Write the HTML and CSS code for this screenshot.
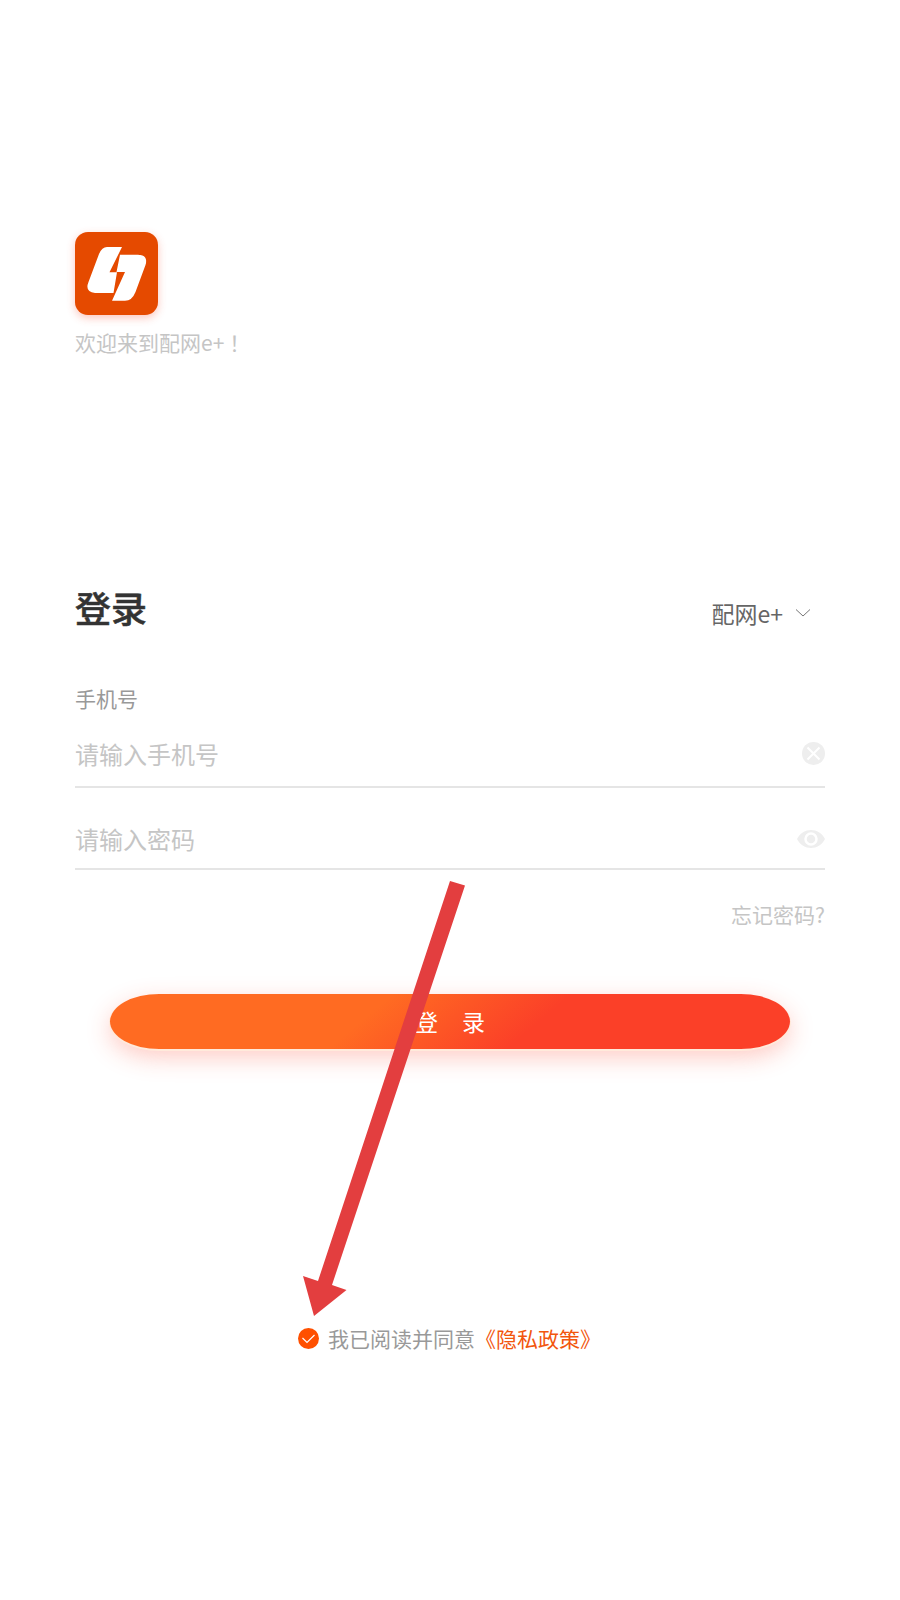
FILE: index.html
```
<!DOCTYPE html>
<html lang="zh-CN">
<head>
  <meta charset="UTF-8">
  <meta name="viewport" content="width=device-width, initial-scale=1.0">
  <title>登录</title>
  <link rel="stylesheet" href="styles.css">
</head>
<body>
  <div class="page">
    <header class="welcome">
      <svg class="logo" viewBox="0 0 83 83">
        <path d="M32 15H47L34.500 40.300H42L38.500 61H20Q9.500 60 13.500 50L24 22Q27 15 32 15Z" fill="#fff"/>
        <path d="M45 22.700H63Q73.500 23 70.500 33L60.500 60Q57 68.800 50 68.800H37L50 40H41.500Z" fill="#fff"/>
      </svg>
      <p>欢迎来到配网e+<span class="mark">！</span></p>
    </header>

    <div class="heading">
      <h1>登录</h1>
      <div class="select">
        <span>配网e+</span>
        <svg width="16" height="10" viewBox="0 0 16 10">
          <path d="M1 1.500L8 8L15 1.500" fill="none" stroke="#777" stroke-width="1"/>
        </svg>
      </div>
    </div>

    <label class="label">手机号</label>
    <div class="field phone">
      <span>请输入手机号</span>
      <svg width="23" height="23" viewBox="0 0 23 23">
        <circle cx="11.500" cy="11.500" r="11.500" fill="#eee"/>
        <path d="M5.500 5.500L17.500 17.500M17.500 5.500L5.500 17.500" stroke="#fff" stroke-width="2"/>
      </svg>
    </div>
    <div class="field password">
      <span>请输入密码</span>
      <svg width="28" height="18" viewBox="0 0 28 18">
        <path d="M0 9C6 -3 22 -3 28 9C22 21 6 21 0 9Z" fill="#eee"/>
        <circle cx="14" cy="9" r="5.500" fill="#eee" stroke="#fff" stroke-width="2.500"/>
      </svg>
    </div>
    <a class="forgot">忘记密码?</a>

    <button class="submit"><span>登</span><span>录</span></button>

    <div class="agree">
      <svg width="21" height="21" viewBox="0 0 21 21">
        <circle cx="10.500" cy="10.500" r="10.500" fill="#ff5000"/>
        <path d="M4.500 10L9 14.500L16.500 7" fill="none" stroke="#fff" stroke-width="1.200"/>
      </svg>
      <span>我已阅读并同意<a>《隐私政策》</a></span>
    </div>

    <!-- arrow pointing at the agreement checkbox -->
    <svg class="arrow" width="170" height="440" viewBox="0 0 170 440">
      <path d="M150 1L165 5.500L32 405L46.500 410L14 436L3 396L18 401Z" fill="#e33e3f"/>
    </svg>
  </div>
</body>
</html>
```
FILE: styles.css
```
* {
  box-sizing: border-box;
}
body {
  margin: 0;
  background-color: #fff;
  font-family: "Noto Sans CJK SC", sans-serif;
}
.page {
  position: relative;
  display: flex;
  flex-direction: column;
  height: 1600px;
  padding: 232px 75px 0;
}
h1, p {
  margin: 0;
}
svg {
  display: block;
  flex-shrink: 0;
}
.welcome {
  height: 351px;
}
.logo {
  width: 83px;
  height: 83px;
  background-color: #e54a00;
  border-radius: 13px;
  box-shadow: 0 3px 8px rgba(245, 70, 40, 0.3);
}
.welcome p {
  margin-top: 12px;
  font-size: 21px;
  line-height: 30px;
  color: #c5c5c5;
}
.mark {
  padding-left: 5px;
}
.heading {
  display: flex;
  justify-content: space-between;
  height: 99px;
}
h1 {
  font-size: 36px;
  line-height: 48px;
  font-weight: 500;
  color: #333;
  -webkit-text-stroke: 0.5px #333;
}
.select {
  display: flex;
  align-items: center;
  gap: 12px;
  height: 60px;
  padding-right: 14px;
  font-size: 23px;
  color: #666;
}
.label {
  font-size: 21px;
  line-height: 32px;
  color: #999;
}
.field {
  display: flex;
  justify-content: space-between;
  align-items: center;
  border-bottom: 2px solid #e5e5e5;
  font-size: 24px;
  line-height: 36px;
  color: #c5c5c5;
}
.phone {
  height: 74px;
  padding-top: 7px;
}
.password {
  height: 82px;
  padding-top: 21px;
}
.forgot {
  align-self: flex-end;
  margin-top: 28px;
  font-size: 21px;
  line-height: 32px;
  color: #c5c5c5;
}
.submit {
  display: flex;
  justify-content: center;
  align-items: center;
  gap: 24px;
  height: 55px;
  margin: 64px 35px 0;
  padding: 0 0 2px;
  border: 0;
  border-radius: 50px / 28px;
  background: linear-gradient(140deg, #ff6b22 38%, #fb4028 62%);
  box-shadow: 0 1px 0 1px #ffeadb, 0 8px 24px rgba(251, 64, 40, 0.28);
  font-family: inherit;
  font-size: 23px;
  color: #fff;
}
.agree {
  display: flex;
  align-items: center;
  gap: 9px;
  margin: 273px 0 0 223px;
  font-size: 21px;
  line-height: 32px;
  color: #999;
}
.agree a {
  color: #f2560d;
}
.arrow {
  position: absolute;
  left: 300px;
  top: 880px;
}
```
